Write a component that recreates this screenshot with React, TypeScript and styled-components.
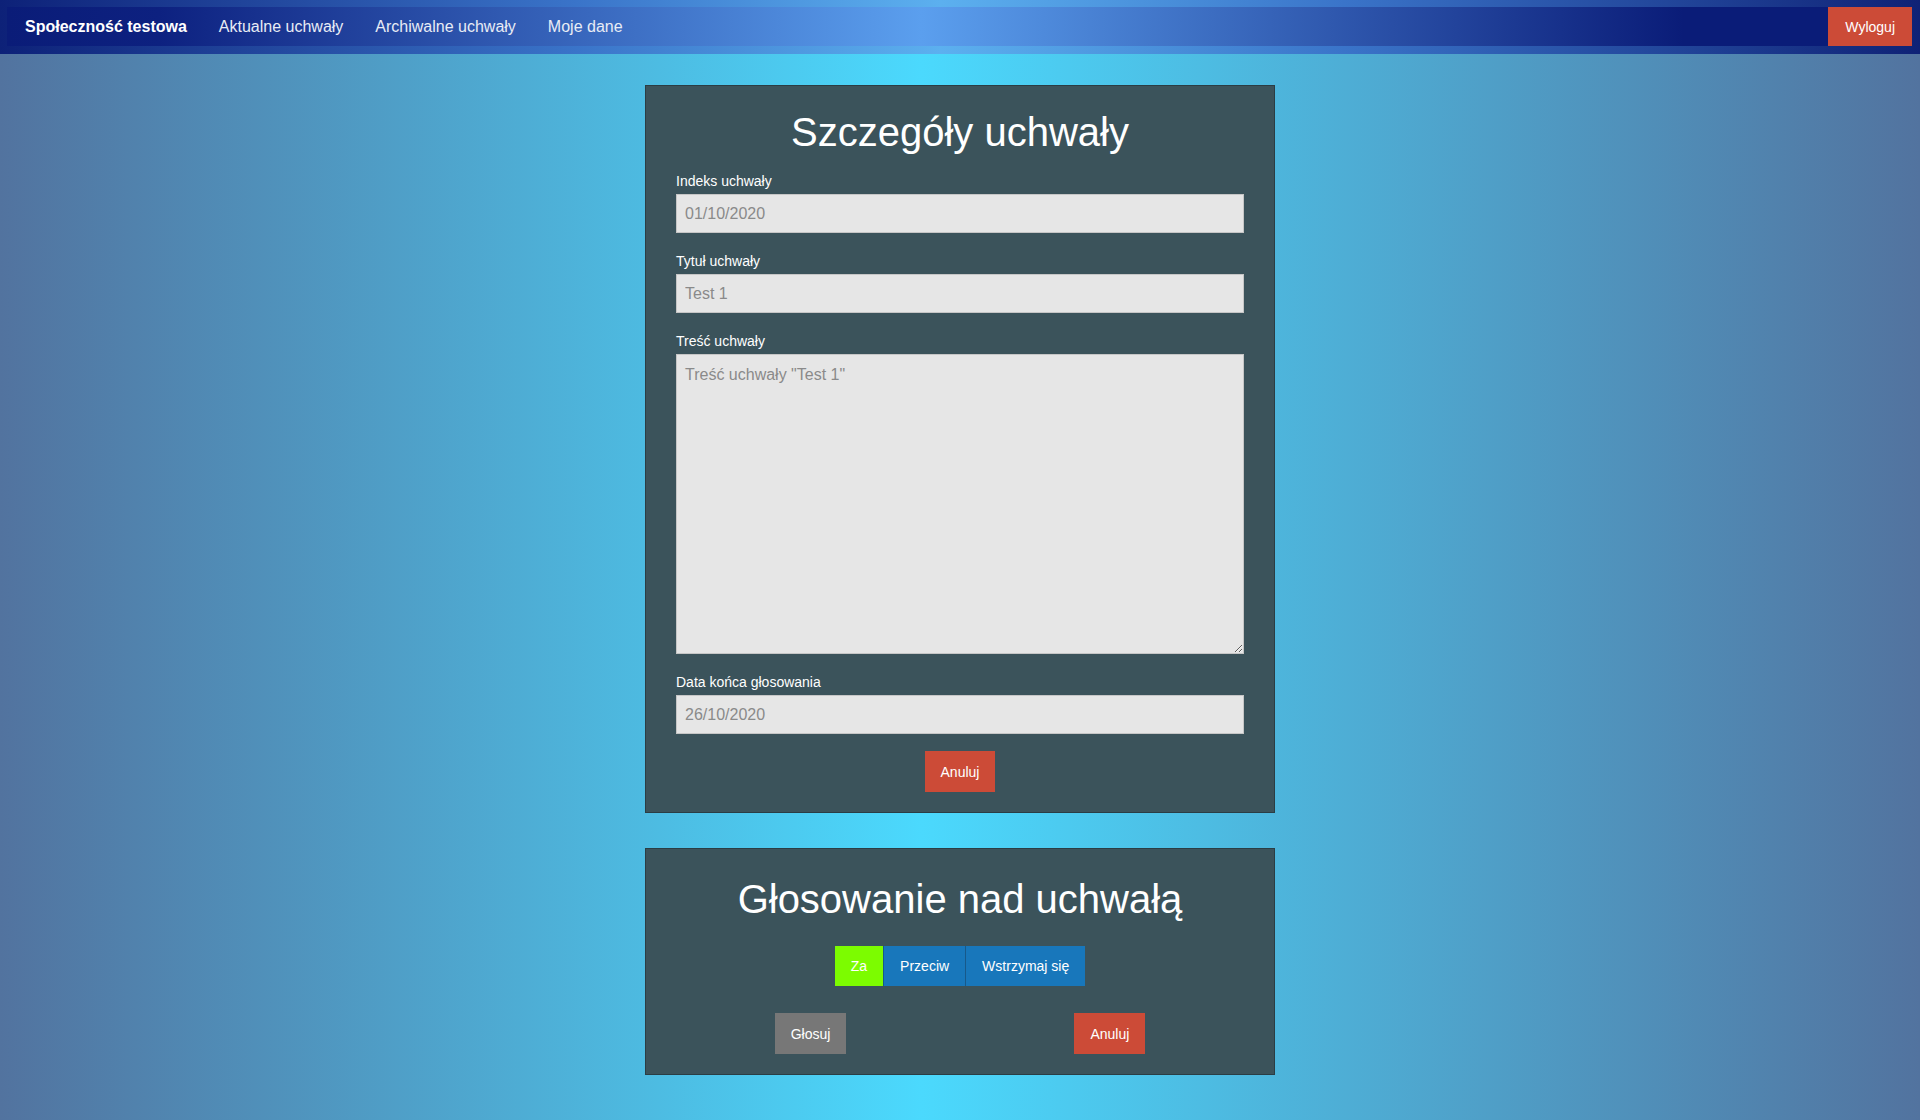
import styled, { createGlobalStyle } from "styled-components";

const GlobalStyle = createGlobalStyle`
  * {
    box-sizing: border-box;
  }
  html,
  body {
    margin: 0;
    padding: 0;
  }
  body {
    min-height: 100vh;
    font-family: "Liberation Sans", Arial, sans-serif;
    color: #ffffff;
    background: linear-gradient(90deg, #52739f 0%, #4bd9fd 48%, #52739f 100%);
  }
`;

const navLinks = ["Aktualne uchwały", "Archiwalne uchwały", "Moje dane"];

const fields = [
  { label: "Indeks uchwały", value: "01/10/2020" },
  { label: "Tytuł uchwały", value: "Test 1" },
];

const App = () => {
  return (
    <>
      <GlobalStyle />
      <Header>
        <NavBand>
          <Brand>Społeczność testowa</Brand>
          {navLinks.map((link) => (
            <NavLink key={link}>{link}</NavLink>
          ))}
          <Spacer />
          <LogoutButton>Wyloguj</LogoutButton>
        </NavBand>
      </Header>

      <Main>
        {/* szczegóły */}
        <Card>
          <Title $mt={24} $mb={17}>
            Szczegóły uchwały
          </Title>
          <Form>
            {fields.map((f) => (
              <Field key={f.label}>
                <Label>{f.label}</Label>
                <Input value={f.value} readOnly />
              </Field>
            ))}
            <Field>
              <Label>Treść uchwały</Label>
              <TextArea value={'Treść uchwały "Test 1"'} readOnly />
            </Field>
            <Field>
              <Label>Data końca głosowania</Label>
              <Input value="26/10/2020" readOnly />
            </Field>
            <ButtonRow>
              <ActionButton $color="#cc4b37">Anuluj</ActionButton>
            </ButtonRow>
          </Form>
        </Card>

        {/* głosowanie */}
        <Card>
          <Title $mt={28} $mb={25}>
            Głosowanie nad uchwałą
          </Title>
          <ToggleGroup>
            <ToggleButton $active>Za</ToggleButton>
            <ToggleButton>Przeciw</ToggleButton>
            <ToggleButton>Wstrzymaj się</ToggleButton>
          </ToggleGroup>
          <VoteActions>
            <ActionButton $color="#777777">Głosuj</ActionButton>
            <ActionButton $color="#cc4b37">Anuluj</ActionButton>
          </VoteActions>
        </Card>
      </Main>
    </>
  );
};

export default App;

const Header = styled.header`
  height: 54px;
  padding: 7px 8px 0 7px;
  background: linear-gradient(
    90deg,
    #0d2178 0%,
    #3a74c9 30%,
    #5cb0ef 49%,
    #3a74c9 70%,
    #0f2276 100%
  );
`;

const NavBand = styled.nav`
  height: 39px;
  display: flex;
  align-items: center;
  padding-left: 2px;
  background: linear-gradient(
    90deg,
    #0a1c78 0%,
    #0d2180 8%,
    #5b9fee 48%,
    #0a1c78 88%,
    #0a1c78 100%
  );
`;

const Brand = styled.span`
  padding: 0 16px;
  font-size: 16px;
  font-weight: 700;
  color: #ffffff;
  white-space: nowrap;
`;

const NavLink = styled.span`
  padding: 0 16px;
  font-size: 16px;
  color: #e8ecf5;
  white-space: nowrap;
`;

const Spacer = styled.div`
  flex: 1;
`;

const LogoutButton = styled.button`
  height: 100%;
  padding: 0 17px;
  border: none;
  background: #cc4b37;
  color: #ffffff;
  font-family: inherit;
  font-size: 14px;
`;

const Main = styled.main`
  display: flex;
  flex-direction: column;
  align-items: center;
  gap: 35px;
  padding: 31px 0 40px;
`;

const Card = styled.section`
  width: 630px;
  padding: 0 30px 20px;
  background: #3b535b;
  border: 1px solid #2b3d44;
`;

const Title = styled.h1<{ $mt: number; $mb: number }>`
  margin: ${(p) => p.$mt}px 0 ${(p) => p.$mb}px;
  font-size: 40px;
  line-height: 44px;
  font-weight: 400;
  text-align: center;
  color: #ffffff;
`;

const Form = styled.div`
  display: flex;
  flex-direction: column;
  gap: 18px;
`;

const Field = styled.div`
  display: flex;
  flex-direction: column;
  gap: 3px;
`;

const Label = styled.label`
  font-size: 14px;
  line-height: 20px;
  color: #ffffff;
`;

const Input = styled.input`
  height: 39px;
  width: 100%;
  padding: 0 8px;
  border: 1px solid #c6c6c6;
  background: #e6e6e6;
  color: #8a8a8a;
  font-family: inherit;
  font-size: 16px;
  outline: none;
`;

const TextArea = styled.textarea`
  height: 300px;
  width: 100%;
  padding: 11px 8px;
  border: 1px solid #c6c6c6;
  background: #e6e6e6;
  color: #8a8a8a;
  font-family: inherit;
  font-size: 16px;
  outline: none;
`;

const ButtonRow = styled.div`
  display: flex;
  justify-content: center;
  margin-top: -1px;
`;

const ActionButton = styled.button<{ $color: string }>`
  height: 41px;
  padding: 0 16px;
  border: none;
  background: ${(p) => p.$color};
  color: #ffffff;
  font-family: inherit;
  font-size: 14px;
`;

const ToggleGroup = styled.div`
  display: flex;
  justify-content: center;
`;

const ToggleButton = styled.button<{ $active?: boolean }>`
  height: 40px;
  padding: 0 16px;
  border: none;
  background: ${(p) => (p.$active ? "#7cfc00" : "#1877bb")};
  color: #ffffff;
  font-family: inherit;
  font-size: 14px;

  & + & {
    border-left: 1px solid #17598a;
  }
`;

const VoteActions = styled.div`
  display: flex;
  justify-content: center;
  gap: 228px;
  margin-top: 27px;
`;
